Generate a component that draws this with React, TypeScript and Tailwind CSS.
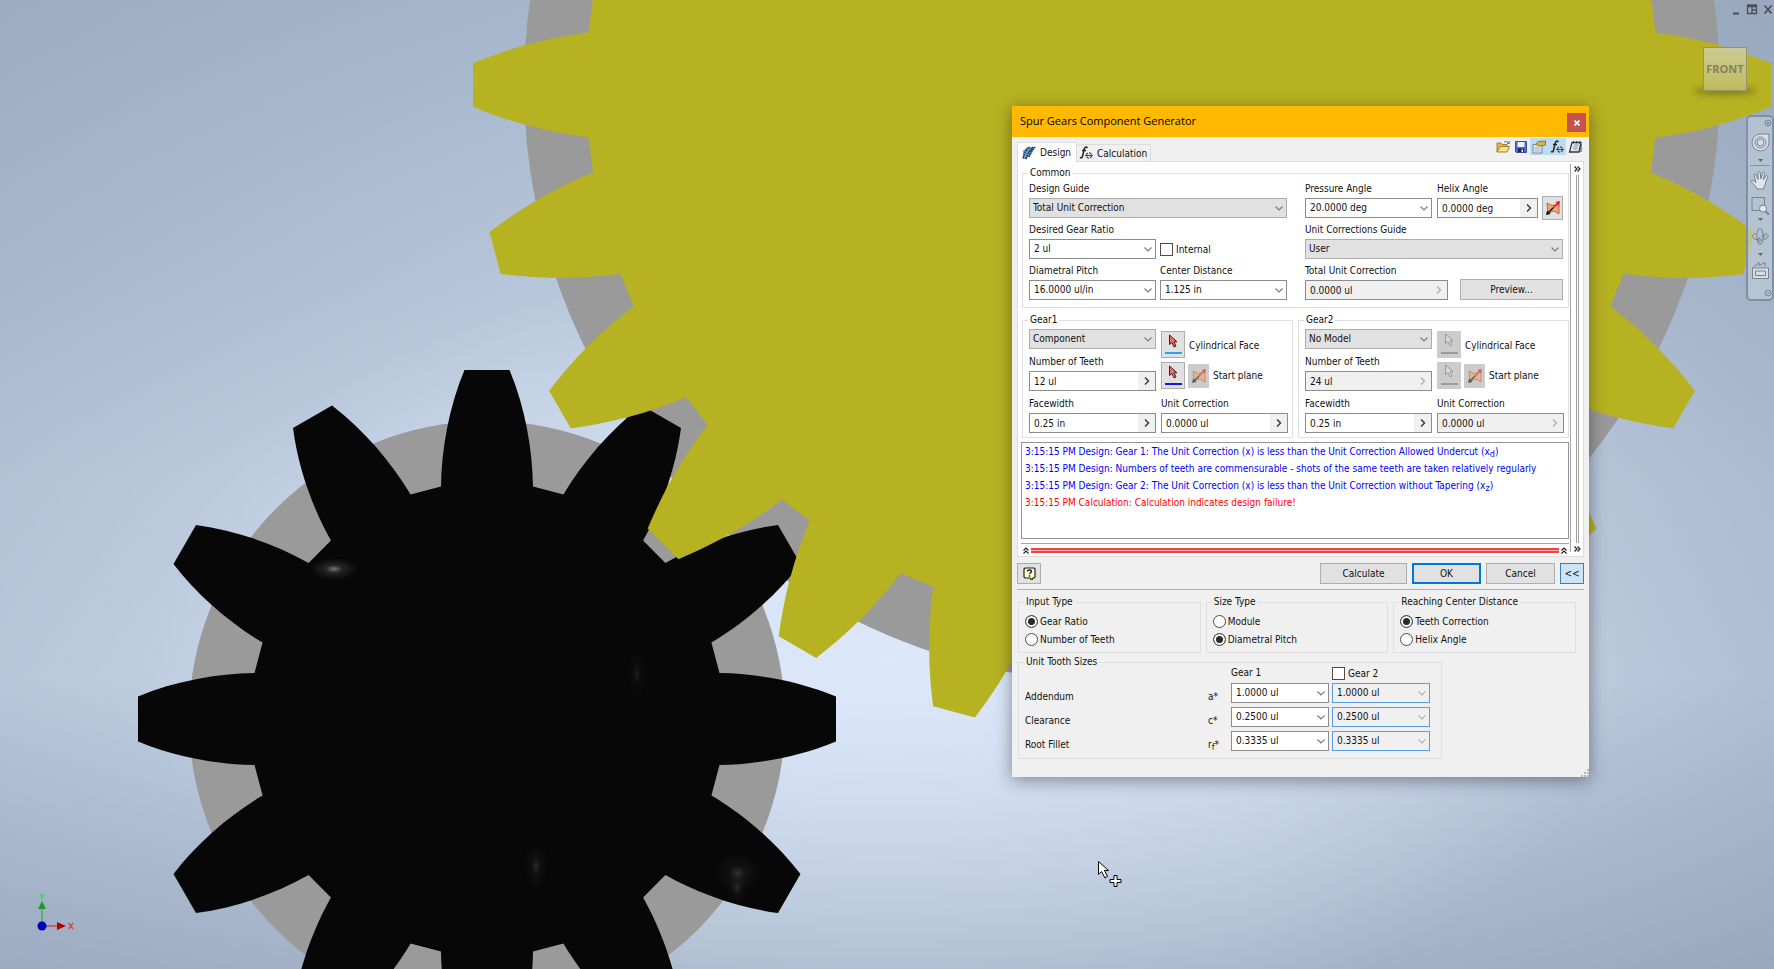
import type { ReactNode } from "react";
import clsx from "clsx";

type Point = [number, number];

type GearSpec = {
  teeth: number;
  root: Point;
  c1: Point;
  c2: Point;
  tip: Point;
};

const PINION: GearSpec = {
  teeth: 12,
  root: [232.5, 46],
  c1: [270, 45.5],
  c2: [312, 38],
  tip: [349, 22.5],
};

const WHEEL: GearSpec = {
  teeth: 24,
  root: [533.5, 52.5],
  c1: [574, 47.5],
  c2: [612, 37],
  tip: [649, 21.7],
};

const MESSAGES = [
  {
    text: "3:15:15 PM Design: Gear 1: The Unit Correction (x) is less than the Unit Correction Allowed Undercut (x",
    sub: "d",
    error: false,
  },
  {
    text: "3:15:15 PM Design: Numbers of teeth are commensurable - shots of the same teeth are taken relatively regularly",
    sub: "",
    error: false,
  },
  {
    text: "3:15:15 PM Design: Gear 2: The Unit Correction (x) is less than the Unit Correction without Tapering (x",
    sub: "z",
    error: false,
  },
  {
    text: "3:15:15 PM Calculation: Calculation indicates design failure!",
    sub: "",
    error: true,
  },
];

const TOOTH_SIZES = [
  { name: "Addendum", symbol: "a", sub: "", value: "1.0000 ul" },
  { name: "Clearance", symbol: "c", sub: "", value: "0.2500 ul" },
  { name: "Root Fillet", symbol: "r", sub: "f", value: "0.3335 ul" },
];

const OPTION_GROUPS = [
  { title: "Input Type", options: ["Gear Ratio", "Number of Teeth"], checked: 0 },
  { title: "Size Type", options: ["Module", "Diametral Pitch"], checked: 1 },
  {
    title: "Reaching Center Distance",
    options: ["Teeth Correction", "Helix Angle"],
    checked: 0,
  },
];

function gearPath({ teeth, root, c1, c2, tip }: GearSpec) {
  const parts: string[] = [];
  for (let i = 0; i < teeth; i++) {
    const a = (i * 2 * Math.PI) / teeth;
    const at = ([x, y]: Point, side: number) => {
      const px = x * Math.cos(a) - side * y * Math.sin(a);
      const py = x * Math.sin(a) + side * y * Math.cos(a);
      return `${px.toFixed(1)} ${py.toFixed(1)}`;
    };
    parts.push(
      `${i === 0 ? "M" : "L"}${at(root, -1)}`,
      `C${at(c1, -1)} ${at(c2, -1)} ${at(tip, -1)}`,
      `L${at(tip, 1)}`,
      `C${at(c2, 1)} ${at(c1, 1)} ${at(root, 1)}`
    );
  }
  return parts.join("") + "Z";
}

function Scene() {
  return (
    <svg
      className="absolute inset-0 h-full w-full"
      viewBox="0 0 1774 969"
      preserveAspectRatio="xMidYMid slice"
      aria-hidden="true"
    >
      <defs>
        <linearGradient id="sky" x1="0" y1="0" x2="0" y2="1">
          <stop offset="0" stopColor="#a6b6ca" />
          <stop offset="0.3" stopColor="#b7c6da" />
          <stop offset="0.5" stopColor="#c8d5e8" />
          <stop offset="0.7" stopColor="#cfdcef" />
          <stop offset="0.85" stopColor="#bac8dc" />
          <stop offset="1" stopColor="#a6b5ca" />
        </linearGradient>
        <radialGradient id="light" cx="0.5" cy="0.68" r="0.42">
          <stop offset="0" stopColor="#e0ebfd" stopOpacity="0.8" />
          <stop offset="1" stopColor="#e0ebfd" stopOpacity="0" />
        </radialGradient>
        <linearGradient id="sides" x1="0" y1="0" x2="1" y2="0">
          <stop offset="0" stopColor="#8394ac" stopOpacity="0.3" />
          <stop offset="0.3" stopColor="#8394ac" stopOpacity="0" />
          <stop offset="0.7" stopColor="#8394ac" stopOpacity="0" />
          <stop offset="1" stopColor="#8394ac" stopOpacity="0.4" />
        </linearGradient>
        <radialGradient id="glint">
          <stop offset="0" stopColor="#fff" stopOpacity="0.45" />
          <stop offset="0.35" stopColor="#fff" stopOpacity="0.12" />
          <stop offset="1" stopColor="#fff" stopOpacity="0" />
        </radialGradient>
      </defs>
      <rect width="1774" height="969" fill="url(#sky)" />
      <rect width="1774" height="969" fill="url(#sides)" />
      <rect width="1774" height="969" fill="url(#light)" />

      <circle cx="1122" cy="85" r="598" fill="#9a9a9a" />
      <circle cx="487" cy="719" r="298" fill="#9a9a9a" />
      <path d={gearPath(PINION)} transform="translate(487 719)" fill="#070707" />
      <ellipse cx="334" cy="569" rx="24" ry="11" fill="url(#glint)" />
      <ellipse cx="536" cy="866" rx="12" ry="26" fill="url(#glint)" opacity="0.3" />
      <ellipse cx="637" cy="674" rx="9" ry="26" fill="url(#glint)" opacity="0.2" />
      <ellipse cx="738" cy="873" rx="24" ry="20" fill="url(#glint)" opacity="0.35" />
      <ellipse cx="737" cy="888" rx="10" ry="18" fill="url(#glint)" opacity="0.3" />
      <path d={gearPath(WHEEL)} transform="translate(1122 85)" fill="#b7b222" />
    </svg>
  );
}

function Triad() {
  return (
    <svg className="absolute bottom-[26px] left-[30px] h-[50px] w-[50px]" viewBox="0 0 50 50" aria-hidden="true">
      <path d="M12 32V14" stroke="#2fa84a" strokeWidth="1.2" />
      <path d="M12 8l4 8H8z" fill="#189a2a" />
      <path d="M12 33h18" stroke="#c33" strokeWidth="1.2" />
      <path d="M27 29l9 4-9 4z" fill="#b00000" />
      <circle cx="12" cy="33" r="4.5" fill="#0000b4" />
      <path d="M9.500 1l2.500 3 2.500-3M12 4v3" fill="none" stroke="#35d84b" strokeWidth="1.4" />
      <path d="M38.500 30l4.500 6M43 30l-4.500 6" stroke="#e04444" strokeWidth="1.4" />
    </svg>
  );
}

function Cursor() {
  return (
    <svg className="absolute left-[1097px] top-[860px] h-7 w-7" viewBox="0 0 28 28" aria-hidden="true">
      <path
        d="M1.500 1.500v13l3-3 3.500 6.500 2.500-1.500-3-6h4z"
        fill="#fff"
        stroke="#000"
      />
      <path
        d="M17 15.500h3v4h4v3h-4v4h-3v-4h-4v-3h4z"
        fill="#fff"
        stroke="#000"
      />
    </svg>
  );
}

function WindowButtons() {
  const button = "flex h-4 w-4 items-center justify-center";
  return (
    <div className="absolute -right-[2px] top-[1px] flex text-[#4b5059]">
      <button className={button} aria-label="Minimize">
        <svg className="h-3 w-3" viewBox="0 0 12 12">
          <path d="M3 10.500h6" stroke="currentColor" strokeWidth="2" />
        </svg>
      </button>
      <button className={button} aria-label="Restore">
        <svg className="h-3 w-3" viewBox="0 0 12 12" fill="none" stroke="currentColor">
          <path d="M1.500 2h9v8.500h-9zM1.500 3.500h9M6 3v7.500M6 7h4.500" strokeWidth="1.300" />
        </svg>
      </button>
      <button className={button} aria-label="Close view">
        <svg className="h-3 w-3" viewBox="0 0 12 12">
          <path d="M2.500 2.500l7 8M9.500 2.500l-7 8" stroke="currentColor" strokeWidth="1.800" />
        </svg>
      </button>
    </div>
  );
}

function ViewCube() {
  return (
    <div className="absolute right-[17px] top-[47px] flex flex-col items-center">
      <button className="relative z-10 flex h-[44px] w-[44px] items-center justify-center border border-[#94946a] bg-linear-to-b from-[#cccda0]/90 to-[#c3be62]/90 font-['Open_Sans',sans-serif] text-[11px] font-bold text-[#84825a]">
        FRONT
      </button>
      <div className="-mt-1 h-2 w-[64px] rounded-[50%] bg-[#5f5c14]/60 blur-[3px]" />
    </div>
  );
}

function NavBar() {
  const item = "flex items-center justify-center";
  return (
    <nav
      aria-label="Navigation"
      className="absolute right-0 top-[115px] flex h-[186px] w-[28px] flex-col items-center rounded-[5px] border-2 border-[#7f8fa5] bg-[#c3cedb]/60 text-[#76818e]"
    >
      <button className={clsx(item, "h-3 self-end")} aria-label="Close navigation bar">
        <svg className="h-2 w-2" viewBox="0 0 8 8" fill="none" stroke="currentColor">
          <circle cx="4" cy="4" r="3" />
          <path d="M3 3l2 2M5 3L3 5" />
        </svg>
      </button>
      <button className={clsx(item, "h-[28px]")} aria-label="Steering wheel">
        <svg className="h-[19px] w-[19px]" viewBox="0 0 19 19" fill="#d6dee8" stroke="currentColor">
          <path d="M1 9.500A8.500 8.500 0 0 1 9.500 1H18v8.500a8.500 8.500 0 0 1-17 0z" />
          <circle cx="9.500" cy="9.500" r="5.500" />
          <circle cx="9.500" cy="9.500" r="3.500" />
        </svg>
      </button>
      <span className="flex h-[10px] w-[20px] items-center justify-center border-b border-[#8592a3]">
        <Caret />
      </span>
      <button className={clsx(item, "h-[29px]")} aria-label="Pan">
        <svg className="h-[20px] w-[20px]" viewBox="0 0 20 20" fill="#dfe5ec" stroke="currentColor" strokeLinejoin="round">
          <path d="M7 19c-1-3-4-5-6-7.500 0-1.500 2-1.500 5 1L4 5c0-1.500 2-1.500 2.300 0L8 9.500 8 2.500c.2-1.500 2-1.500 2.200 0l.6 6.500L12.500 3c.6-1.400 2.100-1 2 .5l-1.200 6.200 2.500-3.700c1-1 2.300 0 1.800 1.300-1.500 3.200-2.600 8-4.300 11.700z" />
        </svg>
      </button>
      <button className={clsx(item, "h-[22px]")} aria-label="Zoom window">
        <svg className="h-[19px] w-[19px]" viewBox="0 0 19 19" fill="none" stroke="currentColor">
          <path d="M1 1.500h12.500v13H1z" />
          <path d="M14.500 15.500l3.500 3" strokeWidth="2" />
          <circle cx="12" cy="12.500" r="3.500" fill="#e7ecf2" />
        </svg>
      </button>
      <Caret />
      <button className={clsx(item, "h-[28px]")} aria-label="Orbit">
        <svg className="h-[19px] w-[19px]" viewBox="0 0 19 19" fill="none" stroke="currentColor">
          <ellipse cx="9" cy="9.500" rx="3.200" ry="8" />
          <path d="M5 6.500c-5 1-5 5 0 6l3 .3M8 10.500v4.500l2.500-2.300zM13.500 6.500c5 1.200 5 4.800-1 6M12.500 7v4M10.500 9h4" />
        </svg>
      </button>
      <Caret />
      <button className={clsx(item, "h-[26px]")} aria-label="Look at">
        <svg className="h-[19px] w-[19px]" viewBox="0 0 19 19" fill="#d6dee8" stroke="currentColor">
          <path d="M1.500 7h16v10.500h-16z" />
          <path d="M4.500 10h10v4.500h-10z" />
          <path d="M2 6.500l6-5v3l6-3v4" fill="none" />
        </svg>
      </button>
      <button className={clsx(item, "mt-1 h-3 self-end")} aria-label="Navigation bar options">
        <svg className="h-2 w-2" viewBox="0 0 8 8" fill="none" stroke="currentColor">
          <circle cx="4" cy="4" r="3" />
          <path d="M2.500 4h3" />
        </svg>
      </button>
    </nav>
  );
}

function Caret() {
  return (
    <svg className="h-[7px] w-[5px] shrink-0" viewBox="0 0 5 7" aria-hidden="true">
      <path d="M0 2h5L2.500 5z" fill="#5e6975" />
    </svg>
  );
}

function Chevron({ dim }: { dim?: boolean }) {
  return (
    <svg
      className={clsx(
        "pointer-events-none absolute right-1 top-1/2 h-[8px] w-[8px] -translate-y-1/2",
        dim ? "text-[#b4b4b4]" : "text-[#7c7c7c]"
      )}
      viewBox="0 0 8 8"
      aria-hidden="true"
    >
      <path d="M.5 2.500l3.500 3.500 3.500-3.500" fill="none" stroke="currentColor" strokeWidth="1.200" />
    </svg>
  );
}

type FieldProps = {
  id: string;
  value: string;
  label?: string;
  className?: string;
  disabled?: boolean;
};

function Label({ id, text }: { id: string; text: string }) {
  return (
    <label htmlFor={id} className="mb-px block h-4 leading-4 whitespace-nowrap">
      {text}
    </label>
  );
}

function Select({
  id,
  value,
  label,
  className,
  disabled,
  tone = "edit",
}: FieldProps & { tone?: "list" | "edit" | "focus" }) {
  return (
    <div className={className}>
      {label && <Label id={id} text={label} />}
      <div className="relative">
        <select
          id={id}
          disabled={disabled}
          aria-label={label ? undefined : id}
          className={clsx(
            "block h-5 w-full appearance-none border leading-4",
            tone === "list" && "border-[#adadad] bg-[#e1e1e1] pl-[3px]",
            tone === "edit" && "border-[#8c8c8c] bg-white pl-1",
            tone === "focus" && "border-[#569de5] bg-[#f0f0f0] pl-1 opacity-100"
          )}
        >
          <option>{value}</option>
        </select>
        <Chevron dim={disabled} />
      </div>
    </div>
  );
}

function Stepper({ id, value, label, className, disabled }: FieldProps) {
  return (
    <div className={className}>
      {label && <Label id={id} text={label} />}
      <div
        className={clsx(
          "flex h-5 border border-[#8c8c8c]",
          disabled ? "bg-[#f0f0f0]" : "bg-white"
        )}
      >
        <input
          id={id}
          type="text"
          defaultValue={value}
          disabled={disabled}
          className="w-0 min-w-0 flex-1 bg-transparent pl-1"
        />
        <button
          type="button"
          disabled={disabled}
          aria-label={`${id} values`}
          className={clsx(
            "flex w-[17px] items-center justify-center bg-[#f0f0f0]",
            disabled ? "text-[#b4b4b4]" : "text-[#3c3c3c]"
          )}
        >
          <svg className="h-[8px] w-[6px]" viewBox="0 0 6 8">
            <path d="M1 .5L4.500 4 1 7.500" fill="none" stroke="currentColor" strokeWidth="1.500" />
          </svg>
        </button>
      </div>
    </div>
  );
}

function Group({
  title,
  className,
  children,
}: {
  title: string;
  className?: string;
  children: ReactNode;
}) {
  return (
    <fieldset className={clsx("min-w-0 border border-[#dfdfdf]", className)}>
      <legend className="px-[2px] leading-4">{title}</legend>
      {children}
    </fieldset>
  );
}

function PlaneButton({ label, dim, className }: { label: string; dim?: boolean; className?: string }) {
  return (
    <button
      type="button"
      aria-label={label}
      className={clsx(
        "flex h-6 w-[21px] shrink-0 items-center justify-center",
        dim ? "bg-[#cccccc]" : "border border-[#adadad] bg-[#e1e1e1]",
        className
      )}
    >
      <svg className={clsx("h-[14px] w-[14px]", dim && "opacity-60")} viewBox="0 0 14 14">
        <path d="M1 2l5 2.500L13 3v10L8 10l-6 2z" fill="#f3a56c" stroke="#9a5a30" strokeWidth=".8" />
        <path d="M2 12l5-5" stroke="#111" strokeWidth="1.500" />
        <path d="M0 14l1-4.500 3.500 3.500z" fill="#111" />
        <path d="M7 7l4.500-4.500" stroke="#e01818" strokeWidth="1.500" />
        <path d="M14 0l-1 4.500L9.500 1z" fill="#e01818" />
      </svg>
    </button>
  );
}

function PickButton({ label, disabled, bar }: { label: string; disabled?: boolean; bar: string }) {
  return (
    <button
      type="button"
      disabled={disabled}
      aria-label={label}
      className={clsx(
        "flex h-[27px] w-6 shrink-0 flex-col items-center justify-between pt-[2px]",
        disabled ? "bg-[#cccccc] pb-1" : "border border-[#adadad] bg-[#e1e1e1] pb-[3px]"
      )}
    >
      <svg className="h-[14px] w-[10px]" viewBox="0 0 10 14">
        <path
          d="M1.500 1v9.500L4 8.500l2 4.500 2-1-2-4.200h3z"
          fill={disabled ? "#d9d9d9" : "#f36b6b"}
          stroke={disabled ? "#999" : "#3a2222"}
        />
      </svg>
      <span className={clsx("h-[2px] w-[17px] shrink-0", bar)} />
    </button>
  );
}

function GearGroup({
  n,
  model,
  teeth,
  driven,
}: {
  n: number;
  model: string;
  teeth: string;
  driven?: boolean;
}) {
  return (
    <Group title={`Gear${n}`} className="flex-1 pt-px pr-1 pb-1 pl-[5px]">
      <div className="flex gap-[5px] pl-px">
        <div className="flex w-[127px] flex-col gap-[5px]">
          <Select id={`Gear${n} model`} value={model} tone="list" />
          <Stepper
            id={`Gear${n} teeth`}
            label="Number of Teeth"
            value={teeth}
            disabled={driven}
          />
          <Stepper id={`Gear${n} facewidth`} label="Facewidth" value="0.25 in" />
        </div>
        <div className="flex min-w-0 flex-1 flex-col">
          <div className="flex h-[64px] flex-col gap-1 pt-[2px]">
            <div className="flex items-center gap-1">
              <PickButton
                label="Cylindrical Face"
                disabled={driven}
                bar={driven ? "bg-[#9c9c9c]" : "bg-[#29a3f5]"}
              />
              <span className="pt-[2px]">Cylindrical Face</span>
            </div>
            <div className="flex items-center gap-[3px]">
              <PickButton
                label="Start plane"
                disabled={driven}
                bar={driven ? "bg-[#9c9c9c]" : "bg-[#1616e8]"}
              />
              <PlaneButton label="Flip start plane" dim />
              <span className="pl-px">Start plane</span>
            </div>
          </div>
          <Stepper
            id={`Gear${n} correction`}
            label="Unit Correction"
            value="0.0000 ul"
            className="mt-[3px]"
            disabled={driven}
          />
        </div>
      </div>
    </Group>
  );
}

function CommonGroup() {
  return (
    <Group title="Common" className="px-[5px] pb-[7px]">
      <div className="flex justify-between pl-px">
        <div className="flex w-[258px] flex-col gap-1">
          <Select id="Design Guide" label="Design Guide" value="Total Unit Correction" tone="list" />
          <div className="flex items-end gap-1">
            <Select
              id="Desired Gear Ratio"
              label="Desired Gear Ratio"
              value="2 ul"
              className="w-[127px]"
            />
            <label className="flex h-5 items-center gap-[3px]">
              <input
                type="checkbox"
                className="h-[13px] w-[13px] appearance-none border border-[#4c4c4c] bg-white"
              />
              Internal
            </label>
          </div>
          <div className="flex gap-1">
            <Select
              id="Diametral Pitch"
              label="Diametral Pitch"
              value="16.0000 ul/in"
              className="flex-1"
            />
            <Select
              id="Center Distance"
              label="Center Distance"
              value="1.125 in"
              className="flex-1"
            />
          </div>
        </div>

        <div className="flex w-[258px] flex-col gap-1">
          <div className="flex items-end">
            <Select
              id="Pressure Angle"
              label="Pressure Angle"
              value="20.0000 deg"
              className="w-[127px]"
            />
            <Stepper
              id="Helix Angle"
              label="Helix Angle"
              value="0.0000 deg"
              className="ml-[5px] w-[101px]"
            />
            <PlaneButton label="Flip helix direction" className="-mb-[2px] ml-1" />
          </div>
          <Select
            id="Unit Corrections Guide"
            label="Unit Corrections Guide"
            value="User"
            tone="list"
          />
          <div className="flex items-end justify-between">
            <Stepper
              id="Total Unit Correction"
              label="Total Unit Correction"
              value="0.0000 ul"
              className="w-[143px]"
              disabled
            />
            <PushButton className="w-[103px]">Preview...</PushButton>
          </div>
        </div>
      </div>
    </Group>
  );
}

function PushButton({
  className,
  tone = "plain",
  children,
}: {
  className?: string;
  tone?: "plain" | "default" | "active";
  children: ReactNode;
}) {
  return (
    <button
      type="button"
      className={clsx(
        "flex h-[21px] items-center justify-center",
        tone === "plain" && "border border-[#adadad] bg-[#e1e1e1]",
        tone === "default" && "border-2 border-[#0078d7] bg-[#e1e1e1]",
        tone === "active" && "border border-[#3c7fb1] bg-[#cce4f7]",
        className
      )}
    >
      {children}
    </button>
  );
}

function DoubleUp() {
  return (
    <svg className="h-[7px] w-[6px] shrink-0" viewBox="0 0 6 7" aria-hidden="true">
      <path d="M.5 3.500L3 1l2.500 2.500M.5 6.500L3 4l2.500 2.500" fill="none" stroke="#222" strokeWidth="1.200" />
    </svg>
  );
}

function DoubleRight() {
  return (
    <svg className="h-[6px] w-[7px] shrink-0" viewBox="0 0 7 6" aria-hidden="true">
      <path d="M.5 .5L3 3 .5 5.500M3.500 .5L6 3 3.500 5.500" fill="none" stroke="#222" strokeWidth="1.200" />
    </svg>
  );
}

function FunctionIcon({ className }: { className?: string }) {
  return (
    <svg className={className} viewBox="0 0 14 14" aria-hidden="true">
      <path
        d="M8.500 2C7 .3 5.800 1 5.300 3L3.600 10c-.4 1.800-1.400 2.300-2.600 1.400M3 4.500h4"
        fill="none"
        stroke="#222"
        strokeWidth="1.500"
      />
      <circle cx="10" cy="9.500" r="2.600" fill="none" stroke="#444" strokeWidth="1.200" strokeDasharray="3 1" />
      <path d="M6 9.500h8" stroke="#444" />
    </svg>
  );
}

function Tabs() {
  return (
    <div role="tablist" className="flex items-end">
      <button
        role="tab"
        aria-selected="true"
        className="relative -mb-px flex h-[20px] w-[60px] items-center gap-1 border border-b-0 border-[#dcdcdc] bg-white pl-1"
      >
        <svg className="h-[14px] w-[14px] shrink-0" viewBox="0 0 14 14" aria-hidden="true">
          <path d="M5 1h9C12 3 11 5 9.500 8.500L4 13H1V5z" fill="#6d9dcb" />
          <path d="M1 12C2 8 4 3 8 1M4 13c1-5 4-9 7-12M7 11c1-4 3-7 6-10" fill="none" stroke="#27405c" strokeWidth="1.500" strokeDasharray="2 .6" />
        </svg>
        Design
      </button>
      <button
        role="tab"
        aria-selected="false"
        className="flex h-[17px] w-[74px] items-center gap-1 border border-b-0 border-l-0 border-[#dcdcdc] pl-[2px]"
      >
        <FunctionIcon className="h-[14px] w-[14px] shrink-0" />
        Calculation
      </button>
    </div>
  );
}

function Toolbar() {
  const tool = "flex h-[17px] w-[18px] items-center justify-center";
  return (
    <div className="mt-[1px] flex">
      <button type="button" className={tool} aria-label="Open">
        <svg className="h-[14px] w-[14px]" viewBox="0 0 14 14">
          <path d="M1 12V3h4l1 1.500h5V7" fill="#e8b84a" stroke="#8d6a1d" strokeWidth=".8" />
          <path d="M1 12l3-5.500h9.500L11 12z" fill="#ffdf82" stroke="#8d6a1d" strokeWidth=".8" />
          <path d="M8 2.500C9.500 .8 11.500 1 12.500 3M13.300 1v2.500H11" fill="none" stroke="#456" strokeWidth=".8" />
        </svg>
      </button>
      <button type="button" className={tool} aria-label="Save">
        <svg className="h-[12px] w-[12px]" viewBox="0 0 12 12">
          <path d="M.5 .5h11v11h-10l-1-1z" fill="#5568cf" stroke="#3b4aa8" />
          <path d="M2.500 1h7v5h-7z" fill="#eef2fb" />
          <path d="M3 7.500h6V11H3z" fill="#1c2350" />
          <path d="M6.500 8.500H8V11H6.500z" fill="#fff" />
        </svg>
      </button>
      <button type="button" className={clsx(tool, "bg-[#bcdcf4]")} aria-label="Export">
        <svg className="h-[14px] w-[14px]" viewBox="0 0 14 14">
          <path d="M1 4.500h9V13H1z" fill="#eef2f6" stroke="#66788a" strokeWidth=".9" />
          <path d="M2.500 7h6M2.500 9h6M2.500 11h6" stroke="#9aa9b8" />
          <path d="M3.500 4.500L6 1.500l7.500-.5v4L9 6z" fill="#d8b53e" stroke="#7d6a25" strokeWidth=".8" />
        </svg>
      </button>
      <button type="button" className={clsx(tool, "bg-[#bcdcf4]")} aria-label="Function">
        <FunctionIcon className="h-[14px] w-[14px]" />
      </button>
      <button type="button" className={tool} aria-label="Results">
        <svg className="h-[14px] w-[14px]" viewBox="0 0 14 14" fill="none" stroke="#283848">
          <path d="M4 2.500h9L11 12H1.500z" fill="#e8eef5" strokeWidth="1.300" />
          <path d="M6 5h4.500M5.500 7H10M5 9h4.500" stroke="#7d93ad" />
          <path d="M5.500 1v2.500M8.500 1v2.500M11.500 1v2.500M13 4v8" />
        </svg>
      </button>
    </div>
  );
}

function MessageLog() {
  return (
    <div className="mt-1 h-[97px] border border-[#8f949c] bg-white px-[3px]">
      {MESSAGES.map((m) => (
        <p
          key={m.text}
          className={clsx(
            "h-[17px] leading-[17px] whitespace-nowrap",
            m.error ? "text-[#ff0000]" : "text-[#0000ff]"
          )}
        >
          {m.text}
          {m.sub && (
            <>
              <sub className="text-[9px]">{m.sub}</sub>)
            </>
          )}
        </p>
      ))}
    </div>
  );
}

function DesignPanel() {
  return (
    <div className="mx-[5px] flex border border-[#dcdcdc] bg-white pl-[3px]">
      <div className="flex min-w-0 flex-1 flex-col pt-[3px]">
        <div className="flex flex-col gap-1 pl-px">
          <CommonGroup />
          <div className="flex gap-[5px]">
            <GearGroup n={1} model="Component" teeth="12 ul" />
            <GearGroup n={2} model="No Model" teeth="24 ul" driven />
          </div>
        </div>
        <MessageLog />
        <div className="mt-1 flex h-[13px] items-center gap-[2px] border-t border-[#a5a5a5] px-[2px]">
          <DoubleUp />
          <div className="h-[5px] flex-1 border-y-2 border-[#f54040] bg-[#ffb4b4]" />
          <DoubleUp />
        </div>
      </div>
      <div className="mt-[2px] mb-1 ml-px flex w-[13px] flex-col items-center gap-[3px] border-l border-[#a5a5a5] pt-[2px]">
        <DoubleRight />
        <div className="w-[3px] flex-1 border-x border-[#a0a0a0]" />
        <DoubleRight />
      </div>
    </div>
  );
}

function OptionGroup({ title, options, checked }: (typeof OPTION_GROUPS)[number]) {
  return (
    <Group title={title} className="h-[59px] flex-1 px-[5px]">
      <div className="flex flex-col gap-[2px] pt-[3px] pl-px">
        {options.map((o, i) => (
          <label key={o} className="flex h-4 items-center gap-[2px]">
            <input
              type="radio"
              name={title}
              defaultChecked={i === checked}
              className="h-[13px] w-[13px] appearance-none rounded-full border border-[#4c4c4c] bg-white checked:bg-[#2b2b2b] checked:shadow-[inset_0_0_0_2px_#fff]"
            />
            {o}
          </label>
        ))}
      </div>
    </Group>
  );
}

function ToothSizes() {
  return (
    <Group title="Unit Tooth Sizes" className="mt-px w-[424px] pr-[11px] pb-[7px] pl-[5px]">
      <div className="-mt-1 flex items-center justify-end gap-[3px]">
        <span className="w-[98px] leading-3">Gear 1</span>
        <label className="flex h-[14px] w-[98px] items-center gap-[3px]">
          <input
            type="checkbox"
            className="h-[13px] w-[13px] appearance-none border border-[#4c4c4c] bg-white"
          />
          Gear 2
        </label>
      </div>
      <div className="mt-[3px] flex flex-col gap-1">
        {TOOTH_SIZES.map((t) => (
          <div key={t.name} className="flex h-5 pl-px">
            <label htmlFor={`${t.name} 1`} className="w-[183px] pt-[6px] leading-4">
              {t.name}
            </label>
            <span className="flex-1 pt-[6px] leading-4">
              {t.symbol}
              {t.sub && <sub className="text-[9px]">{t.sub}</sub>}*
            </span>
            <Select id={`${t.name} 1`} value={t.value} className="w-[98px]" />
            <Select
              id={`${t.name} 2`}
              value={t.value}
              tone="focus"
              disabled
              className="ml-[3px] w-[98px]"
            />
          </div>
        ))}
      </div>
    </Group>
  );
}

function GeneratorDialog() {
  return (
    <section
      role="dialog"
      aria-label="Spur Gears Component Generator"
      className="absolute left-[1012px] top-[106px] w-[577px] bg-[#f0f0f0] font-['DejaVu_Sans_Condensed','DejaVu_Sans',sans-serif] text-[10px] text-[#111] shadow-[0_3px_16px_rgba(0,0,0,0.4)]"
    >
      <header className="flex h-[31px] items-center justify-between bg-[#ffb900] pr-[3px] pl-2">
        <h1 className="font-['Open_Sans',sans-serif] text-[11px] text-black">
          Spur Gears Component Generator
        </h1>
        <button
          type="button"
          aria-label="Close"
          className="mt-[2px] flex h-[19px] w-[19px] items-center justify-center bg-[#c75050]"
        >
          <svg className="h-[6px] w-[6px]" viewBox="0 0 6 6">
            <path d="M.5 .5l5 5M5.500 .5l-5 5" stroke="#fff" strokeWidth="1.600" />
          </svg>
        </button>
      </header>

      <div className="flex h-6 items-stretch justify-between pr-[5px] pl-[5px]">
        <Tabs />
        <Toolbar />
      </div>

      <DesignPanel />

      <footer className="mx-[5px] flex gap-[5px] border-b border-[#b0b0b0] pt-[6px] pb-[5px]">
        <PushButton className="mr-auto w-6">
          <svg className="h-[13px] w-[13px]" viewBox="0 0 13 13" aria-label="Help">
            <path d="M2 1h9l1 1v8l-1 1h-1l-1 2-2-2H2l-1-1V2z" fill="#ffffb8" stroke="#222" strokeWidth="1.200" />
            <path d="M4.500 4.500c0-2 4-2 4 0 0 1.300-2 1.200-2 2.800M6.500 8.300v1.400" fill="none" stroke="#1c1c90" strokeWidth="1.400" />
          </svg>
        </PushButton>
        <PushButton className="w-[87px]">Calculate</PushButton>
        <PushButton className="w-[69px]" tone="default">OK</PushButton>
        <PushButton className="w-[69px]">Cancel</PushButton>
        <PushButton className="w-6" tone="active">&lt;&lt;</PushButton>
      </footer>

      <div className="pt-1 pr-[13px] pb-[18px] pl-[6px]">
        <div className="flex gap-[5px]">
          {OPTION_GROUPS.map((g) => (
            <OptionGroup key={g.title} {...g} />
          ))}
        </div>
        <ToothSizes />
      </div>

      <svg className="absolute right-0 bottom-0 h-2 w-2" viewBox="0 0 8 8" fill="#b8b8b8" aria-hidden="true">
        <path d="M6 0h2v2H6zM3 3h2v2H3zM6 3h2v2H6zM0 6h2v2H0zM3 6h2v2H3zM6 6h2v2H6z" />
      </svg>
    </section>
  );
}

export default function App() {
  return (
    <main className="relative h-screen min-h-[800px] overflow-hidden bg-[#b7c6da]">
      <Scene />
      <WindowButtons />
      <ViewCube />
      <NavBar />
      <Triad />
      <GeneratorDialog />
      <Cursor />
    </main>
  );
}
